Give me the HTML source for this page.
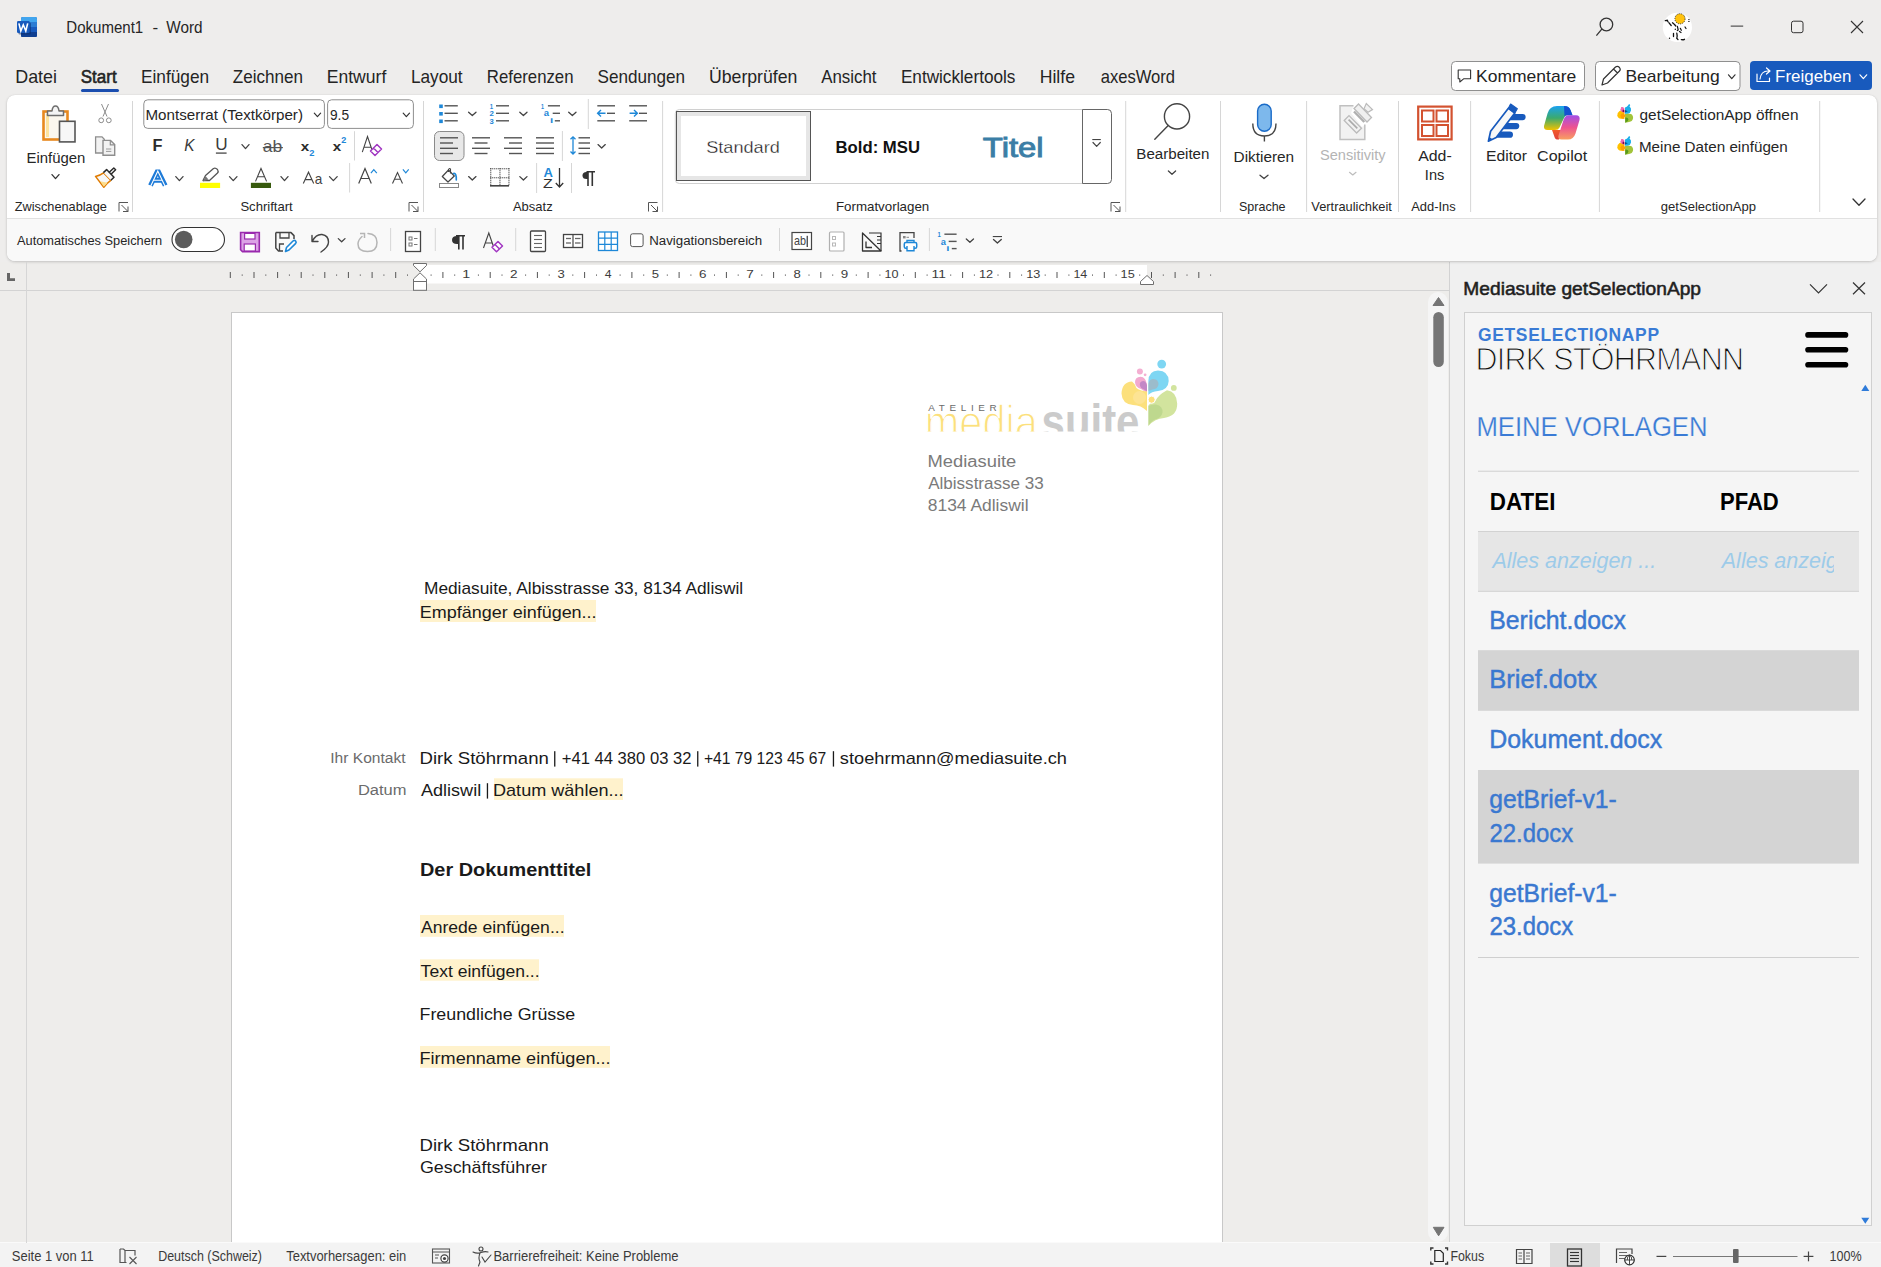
<!DOCTYPE html>
<html><head><meta charset="utf-8"><title>Dokument1 - Word</title>
<style>
html,body{margin:0;padding:0;}
body{width:1881px;height:1267px;overflow:hidden;position:relative;background:#EEEDEC;font-family:"Liberation Sans",sans-serif;}
.abs{position:absolute;box-sizing:border-box;}
#ribbon{left:7px;top:95px;width:1870px;height:166px;background:#fff;border-radius:8px;box-shadow:0 1px 3px rgba(0,0,0,0.18),0 0 1px rgba(0,0,0,0.12);overflow:hidden;}
#qat{left:0;top:123px;width:1870px;height:43px;background:#F9F9F9;border-top:1px solid #E1E1E1;}
#canvas{left:0;top:262px;width:1449px;height:981px;background:#EEEDEB;}
#page{left:231px;top:312px;width:992px;height:931px;background:#fff;border:1px solid #C8C8C8;border-bottom:none;}
#pane{left:1449px;top:262px;width:432px;height:981px;background:#F0F0F0;border-left:1px solid #D2D2D2;}
#panebox{left:1464px;top:312px;width:408px;height:914px;background:#F5F5F5;border:1px solid #D0D0D0;}
#status{left:0;top:1242px;width:1881px;height:25px;background:#F3F3F3;border-top:1px solid #FAFAFA;}
svg{position:absolute;left:0;top:0;font-family:"Liberation Sans",sans-serif;white-space:pre;}
</style></head>
<body>
<div class="abs" id="canvas"></div>
<div class="abs" id="page"></div>
<div class="abs" id="pane"><div class="abs" style="left:14px;top:50px;width:408px;height:914px;background:#F5F5F5;border:1px solid #D0D0D0;"></div></div>
<div class="abs" id="ribbon"><div class="abs" id="qat"></div></div>
<div class="abs" id="status"></div>
<svg width="1881" height="1267" viewBox="0 0 1881 1267">
<rect x="420" y="265" width="727" height="18.5" fill="#fff"/>
<rect x="0" y="290" width="1449" height="1" fill="#D3D3D3"/>
<rect x="26" y="262" width="1" height="981" fill="#D6D6D6"/>
<path d="M7,273 H10 V278.3 H15 V281 H7 Z" fill="#666"/>
<rect x="229.8" y="272" width="1" height="6" fill="#555"/>
<rect x="241.7" y="274.5" width="1" height="1.2" fill="#555"/>
<rect x="253.5" y="272" width="1" height="6" fill="#555"/>
<rect x="265.3" y="274.5" width="1" height="1.2" fill="#555"/>
<rect x="277.1" y="272" width="1" height="6" fill="#555"/>
<rect x="288.9" y="274.5" width="1" height="1.2" fill="#555"/>
<rect x="300.7" y="272" width="1" height="6" fill="#555"/>
<rect x="312.5" y="274.5" width="1" height="1.2" fill="#555"/>
<rect x="324.3" y="272" width="1" height="6" fill="#555"/>
<rect x="336.1" y="274.5" width="1" height="1.2" fill="#555"/>
<rect x="347.9" y="272" width="1" height="6" fill="#555"/>
<rect x="359.8" y="274.5" width="1" height="1.2" fill="#555"/>
<rect x="371.6" y="272" width="1" height="6" fill="#555"/>
<rect x="383.4" y="274.5" width="1" height="1.2" fill="#555"/>
<rect x="395.2" y="272" width="1" height="6" fill="#555"/>
<rect x="407.0" y="274.5" width="1" height="1.2" fill="#555"/>
<rect x="430.6" y="274.5" width="1" height="1.2" fill="#555"/>
<rect x="442.4" y="272" width="1" height="6" fill="#555"/>
<rect x="454.2" y="274.5" width="1" height="1.2" fill="#555"/>
<rect x="477.9" y="274.5" width="1" height="1.2" fill="#555"/>
<rect x="489.7" y="272" width="1" height="6" fill="#555"/>
<rect x="501.5" y="274.5" width="1" height="1.2" fill="#555"/>
<rect x="525.1" y="274.5" width="1" height="1.2" fill="#555"/>
<rect x="536.9" y="272" width="1" height="6" fill="#555"/>
<rect x="548.7" y="274.5" width="1" height="1.2" fill="#555"/>
<rect x="572.3" y="274.5" width="1" height="1.2" fill="#555"/>
<rect x="584.1" y="272" width="1" height="6" fill="#555"/>
<rect x="596.0" y="274.5" width="1" height="1.2" fill="#555"/>
<rect x="619.6" y="274.5" width="1" height="1.2" fill="#555"/>
<rect x="631.4" y="272" width="1" height="6" fill="#555"/>
<rect x="643.2" y="274.5" width="1" height="1.2" fill="#555"/>
<rect x="666.8" y="274.5" width="1" height="1.2" fill="#555"/>
<rect x="678.6" y="272" width="1" height="6" fill="#555"/>
<rect x="690.4" y="274.5" width="1" height="1.2" fill="#555"/>
<rect x="714.0" y="274.5" width="1" height="1.2" fill="#555"/>
<rect x="725.9" y="272" width="1" height="6" fill="#555"/>
<rect x="737.7" y="274.5" width="1" height="1.2" fill="#555"/>
<rect x="761.3" y="274.5" width="1" height="1.2" fill="#555"/>
<rect x="773.1" y="272" width="1" height="6" fill="#555"/>
<rect x="784.9" y="274.5" width="1" height="1.2" fill="#555"/>
<rect x="808.5" y="274.5" width="1" height="1.2" fill="#555"/>
<rect x="820.3" y="272" width="1" height="6" fill="#555"/>
<rect x="832.2" y="274.5" width="1" height="1.2" fill="#555"/>
<rect x="855.8" y="274.5" width="1" height="1.2" fill="#555"/>
<rect x="867.6" y="272" width="1" height="6" fill="#555"/>
<rect x="879.4" y="274.5" width="1" height="1.2" fill="#555"/>
<rect x="903.0" y="274.5" width="1" height="1.2" fill="#555"/>
<rect x="914.8" y="272" width="1" height="6" fill="#555"/>
<rect x="926.6" y="274.5" width="1" height="1.2" fill="#555"/>
<rect x="950.2" y="274.5" width="1" height="1.2" fill="#555"/>
<rect x="962.1" y="272" width="1" height="6" fill="#555"/>
<rect x="973.9" y="274.5" width="1" height="1.2" fill="#555"/>
<rect x="997.5" y="274.5" width="1" height="1.2" fill="#555"/>
<rect x="1009.3" y="272" width="1" height="6" fill="#555"/>
<rect x="1021.1" y="274.5" width="1" height="1.2" fill="#555"/>
<rect x="1044.7" y="274.5" width="1" height="1.2" fill="#555"/>
<rect x="1056.5" y="272" width="1" height="6" fill="#555"/>
<rect x="1068.4" y="274.5" width="1" height="1.2" fill="#555"/>
<rect x="1092.0" y="274.5" width="1" height="1.2" fill="#555"/>
<rect x="1103.8" y="272" width="1" height="6" fill="#555"/>
<rect x="1115.6" y="274.5" width="1" height="1.2" fill="#555"/>
<rect x="1139.2" y="274.5" width="1" height="1.2" fill="#555"/>
<rect x="1151.0" y="272" width="1" height="6" fill="#555"/>
<rect x="1162.8" y="274.5" width="1" height="1.2" fill="#555"/>
<rect x="1174.6" y="272" width="1" height="6" fill="#555"/>
<rect x="1186.5" y="274.5" width="1" height="1.2" fill="#555"/>
<rect x="1198.3" y="272" width="1" height="6" fill="#555"/>
<rect x="1210.1" y="274.5" width="1" height="1.2" fill="#555"/>
<path d="M413.5,263.5 H426.5 V265.5 L420,271.8 L413.5,265.5 Z" fill="#fff" stroke="#6E6E6E" stroke-width="1"/>
<path d="M420,272.8 L426.5,279 V281.5 H413.5 V279 Z" fill="#fff" stroke="#6E6E6E" stroke-width="1"/>
<rect x="413.5" y="281.5" width="13" height="8.8" fill="#fff" stroke="#6E6E6E" stroke-width="1"/>
<path d="M1147,275.5 L1153.5,281.5 V284.5 H1140.5 V281.5 Z" fill="#fff" stroke="#6E6E6E" stroke-width="1"/>
<rect x="1428" y="292" width="20" height="950" rx="10" fill="#F5F5F5"/>
<path d="M1438.5,297.5 L1444,305.5 H1433 Z" fill="#757575" stroke="#757575" stroke-width="1" stroke-linejoin="round"/>
<rect x="1433.3" y="312" width="10.5" height="55" rx="5.25" fill="#757575"/>
<path d="M1433.3,1227.3 H1444 L1438.6,1235.8 Z" fill="#757575" stroke="#757575" stroke-width="1" stroke-linejoin="round"/>
<rect x="21" y="17" width="16" height="20" rx="1.6" fill="#185ABD"/>
<rect x="21" y="17" width="16" height="5" rx="1.6" fill="#41A5EE"/><rect x="21" y="20" width="16" height="2" fill="#41A5EE"/>
<rect x="21" y="22" width="16" height="5" fill="#2B7CD3"/>
<rect x="21" y="27" width="16" height="5" fill="#185ABD"/>
<rect x="21" y="32" width="16" height="5" rx="1.6" fill="#103F91"/><rect x="21" y="32" width="16" height="2" fill="#103F91"/>
<rect x="18.5" y="22.5" width="12.5" height="12" rx="1.2" fill="#0B2E6B" fill-opacity="0.55"/>
<rect x="17" y="21" width="12.7" height="12" rx="1.2" fill="#185ABD"/>
<path d="M18.9,23.4 L20.8,31 L23.3,24.8 L25.8,31 L27.7,23.4" fill="none" stroke="#fff" stroke-width="1.6" stroke-linejoin="miter"/>
<circle cx="1606.4" cy="24.5" r="6.3" fill="none" stroke="#333" stroke-width="1.3"/>
<line x1="1601.8" y1="29.2" x2="1596.8" y2="35.2" stroke="#333" stroke-width="1.3" stroke-linecap="round"/>
<circle cx="1677.4" cy="27.4" r="14.6" fill="#fff"/>
<circle cx="1680" cy="18.8" r="5.1" fill="#FFC20E" stroke="#222" stroke-width="0.8" stroke-dasharray="1.2 1"/>
<path d="M1665.3,20.6 L1667.3,20.3 L1668,21.8 M1669,22.8 L1671.2,25.5 M1672.5,22.8 L1674,24 M1674.5,24.5 L1675.8,26" fill="none" stroke="#111" stroke-width="1.3" stroke-linecap="round"/>
<path d="M1677.4,26.3 L1678.2,30 L1677.3,30.5 M1675.3,29 L1675.3,29.5 M1680.3,28.3 L1681.3,30.3 M1679.5,31.5 L1681,32.5 M1685,27 L1686,28.5" fill="none" stroke="#111" stroke-width="1.2" stroke-linecap="round"/>
<path d="M1673.5,33.3 V36.5 M1676.8,33.2 Q1677.6,36.5 1676.8,38.3 L1678,39.6 M1681.3,39.6 Q1683,40 1684.5,39.3" fill="none" stroke="#111" stroke-width="1.3" stroke-linecap="round"/>
<path d="M1688.2,19.6 H1689.6 M1688.2,21.5 H1689.6" stroke="#111" stroke-width="0.9"/>
<circle cx="1669.5" cy="38.3" r="0.7" fill="#111"/>
<rect x="1730.7" y="25.6" width="12.5" height="1" fill="#333"/>
<rect x="1791.5" y="21.2" width="11.5" height="11.5" rx="2" fill="none" stroke="#333" stroke-width="1"/>
<path d="M1851,21 L1863,33 M1863,21 L1851,33" stroke="#333" stroke-width="1.1"/>
<rect x="81" y="89" width="38" height="3" rx="1.5" fill="#1A4DAF"/>
<rect x="1451.5" y="61.5" width="133" height="29" rx="4" fill="#fff" stroke="#8F8F8F"/>
<path d="M1458.2,70 H1470.6 V78.8 H1463.6 L1459.8,82 V78.8 H1458.2 Z" fill="none" stroke="#333" stroke-width="1.1" stroke-linejoin="round"/>
<rect x="1595.5" y="61.5" width="144.5" height="29" rx="4" fill="#fff" stroke="#8F8F8F"/>
<path d="M1602,85 L1603.5,79 L1615.5,67 Q1617.5,65.5 1619.5,67.5 Q1621,69.5 1619.5,71 L1607.5,83 Z M1613.5,69 L1617.5,73" fill="none" stroke="#333" stroke-width="1.2" stroke-linejoin="round"/>
<polyline points="1728.5,74.8 1731.75,78.6 1735,74.8" fill="none" stroke="#333" stroke-width="1.2" stroke-linecap="round" stroke-linejoin="round"/>
<rect x="1750" y="61" width="122" height="29" rx="4" fill="#185ABD"/>
<path d="M1757,74 V81.5 H1769.5 V78 M1760,79 Q1761,71 1768,71 H1769.5 M1766.5,68 L1770,71 L1766.5,74" fill="none" stroke="#fff" stroke-width="1.2" stroke-linejoin="round" stroke-linecap="round"/>
<polyline points="1860,74.8 1863.35,78.6 1866.7,74.8" fill="none" stroke="#fff" stroke-width="1.2" stroke-linecap="round" stroke-linejoin="round"/>
<rect x="43.5" y="111.5" width="24" height="28" fill="#FBF7EE" stroke="#E8891E" stroke-width="2.6"/>
<rect x="46" y="114" width="3" height="23" fill="#FCE3A0"/>
<path d="M47.5,115.5 V111 H52 Q52.5,106 55.5,106 Q58.5,106 59,111 H63.5 V115.5 Z" fill="#F4F4F4" stroke="#6E6E6E" stroke-width="1.5" stroke-linejoin="round"/>
<rect x="59.5" y="121.3" width="15.5" height="20.6" fill="#F7F7F7" stroke="#555" stroke-width="1.6"/>
<polyline points="52,174.6 55.5,178.6 59,174.6" fill="none" stroke="#333" stroke-width="1.3" stroke-linecap="round" stroke-linejoin="round"/>
<path d="M101.5,104 L107,116.5 M108.5,104 L103,116.5" stroke="#8C8C8C" stroke-width="1" fill="none"/>
<circle cx="101.2" cy="120.3" r="2.4" fill="none" stroke="#8C8C8C" stroke-width="1"/><circle cx="108.8" cy="120.3" r="2.4" fill="none" stroke="#8C8C8C" stroke-width="1"/>
<path d="M95.6,153 V136.8 H102 L104.3,139.2 V153 Z" fill="#F2F2F2" stroke="#8E8E8E" stroke-width="1.3" stroke-linejoin="miter"/>
<path d="M103,155.2 V140.4 H110.5 L114.7,144.6 V155.2 Z" fill="#F2F2F2" stroke="#8E8E8E" stroke-width="1.4" stroke-linejoin="miter"/>
<path d="M110.3,140.6 V144.8 H114.5" fill="none" stroke="#8E8E8E" stroke-width="1.2"/>
<path d="M106,149 H111.3 M106,151.4 H111.3" stroke="#9A9A9A" stroke-width="1"/>
<path d="M95.5,176.4 Q100,175.5 103.5,172.8 L110.8,180.3 Q107,183 103.8,187.2 Z" fill="#F7F7F7" stroke="#E07B00" stroke-width="1.5" stroke-linejoin="round"/>
<path d="M100.2,181.3 L107.6,182.8 L103.8,186.8 Z" fill="#FCDD8C"/>
<path d="M103.4,172.6 L106.6,169.6 L114,177.2 L110.9,180.2" fill="#F7F7F7" stroke="#2B2B2B" stroke-width="1.5" stroke-linejoin="round"/>
<path d="M109,172.5 L113.8,168 L115.6,169.8 L111,174.3" fill="none" stroke="#2B2B2B" stroke-width="1.5" stroke-linejoin="round"/>
<path d="M119.0,211.5 V202.5 H128.0" fill="none" stroke="#555" stroke-width="1"/><path d="M121.5,205 L128.0,211.5 M123.0,211.5 H128.0 V206.5" fill="none" stroke="#555" stroke-width="1"/>
<rect x="132.0" y="101" width="1" height="111" fill="#D6D6D6"/>
<rect x="143.8" y="99.8" width="180.6" height="28.6" rx="4" fill="#fff" stroke="#8F8F8F"/>
<polyline points="314.3,113.2 317.45000000000005,116.6 320.6,113.2" fill="none" stroke="#333" stroke-width="1.2" stroke-linecap="round" stroke-linejoin="round"/>
<rect x="327.6" y="99.8" width="85.8" height="28.6" rx="4" fill="#fff" stroke="#8F8F8F"/>
<polyline points="403.2,113.2 406.35,116.6 409.5,113.2" fill="none" stroke="#333" stroke-width="1.2" stroke-linecap="round" stroke-linejoin="round"/>
<text x="152.62" y="150.80" font-size="16.86" font-weight="bold" fill="#2b2b2b" textLength="9.98" lengthAdjust="spacingAndGlyphs">F</text>
<text x="184.24" y="150.80" font-size="16.86" font-weight="normal" font-style="italic" fill="#3a3a3a" textLength="10.29" lengthAdjust="spacingAndGlyphs">K</text>
<text x="215.19" y="150.30" font-size="16.42" font-weight="normal" fill="#3a3a3a" textLength="12.42" lengthAdjust="spacingAndGlyphs">U</text>
<rect x="215.9" y="152.4" width="10.7" height="1.4" fill="#555"/>
<polyline points="242,144.6 245.5,148.6 249,144.6" fill="none" stroke="#424242" stroke-width="1.3" stroke-linecap="round" stroke-linejoin="round"/>
<text x="262.76" y="151.60" font-size="16.28" font-weight="normal" fill="#555" textLength="19.48" lengthAdjust="spacingAndGlyphs">ab</text>
<rect x="262.8" y="147" width="20.1" height="1.2" fill="#555"/>
<text x="300.68" y="150.80" font-size="12.06" font-weight="bold" fill="#2b2b2b" textLength="8.45" lengthAdjust="spacingAndGlyphs">x</text>
<text x="309.38" y="155.60" font-size="9.01" font-weight="bold" fill="#1E88D8" textLength="5.19" lengthAdjust="spacingAndGlyphs">2</text>
<text x="332.68" y="150.80" font-size="12.06" font-weight="bold" fill="#2b2b2b" textLength="8.45" lengthAdjust="spacingAndGlyphs">x</text>
<text x="341.29" y="142.70" font-size="8.72" font-weight="bold" fill="#1E88D8" textLength="5.08" lengthAdjust="spacingAndGlyphs">2</text>
<rect x="354.0" y="131.2" width="1" height="29.30000000000001" fill="#D6D6D6"/>
<path d="M362.3,152.2 L367.5,136.5 L372.8,152.2 M364,147.3 H371" fill="none" stroke="#444" stroke-width="1.1"/>
<path d="M370.5,151 L377,144.5 L381.5,149 L375,155.5 Z M373.5,148 L378,152.5" fill="#fff" stroke="#A238C2" stroke-width="1.5" stroke-linejoin="round"/>
<path d="M150.5,185.5 L157.8,170.5 L165.2,185.5 M153.5,180.3 H162.1" fill="none" stroke="#1E7BD8" stroke-width="5" stroke-linejoin="bevel"/>
<path d="M150.5,186.5 L157.8,171 L165.2,186.5 M153.5,180.3 H162.1" fill="none" stroke="#fff" stroke-width="1.1" stroke-linejoin="miter"/>
<polyline points="175.8,176.6 179.4,180.6 183,176.6" fill="none" stroke="#424242" stroke-width="1.3" stroke-linecap="round" stroke-linejoin="round"/>
<path d="M203,180.5 L205.5,175.5 L213.5,168.5 Q215.5,167.5 217.5,169.5 Q218.8,171.5 217.5,173 L209.5,180.5 Z" fill="#fff" stroke="#555" stroke-width="1.3" stroke-linejoin="round"/>
<path d="M203,181.5 L205.5,176 L208.5,179.5 Z" fill="#777"/>
<rect x="200" y="182.8" width="20.1" height="5.2" fill="#FFFF00"/>
<polyline points="229.5,176.6 233.25,180.6 237,176.6" fill="none" stroke="#424242" stroke-width="1.3" stroke-linecap="round" stroke-linejoin="round"/>
<path d="M255.5,181.4 L261,168.5 L266.6,181.4 M257.6,176.7 H264.5" fill="none" stroke="#444" stroke-width="1.1"/>
<rect x="250.9" y="182.8" width="20.1" height="5.2" fill="#375A0D"/>
<polyline points="281,176.6 284.5,180.6 288,176.6" fill="none" stroke="#424242" stroke-width="1.3" stroke-linecap="round" stroke-linejoin="round"/>
<path d="M303.3,183.6 L308.5,172.2 L313.7,183.6 M305.2,179.6 H311.8" fill="none" stroke="#444" stroke-width="1.1"/>
<text x="314.73" y="183.60" font-size="15.12" font-weight="normal" fill="#444" textLength="7.57" lengthAdjust="spacingAndGlyphs">a</text>
<polyline points="329.5,176.6 333.35,180.6 337.2,176.6" fill="none" stroke="#424242" stroke-width="1.3" stroke-linecap="round" stroke-linejoin="round"/>
<rect x="349.1" y="163" width="1" height="29.5" fill="#D6D6D6"/>
<path d="M358.7,183.6 L365,168.5 L371.3,183.6 M361.2,178.5 H368.8" fill="none" stroke="#444" stroke-width="1.2"/>
<polyline points="370.9,173.2 373.8,169.6 376.8,173.2" fill="none" stroke="#1E88D8" stroke-width="1.2"/>
<path d="M392.5,183.6 L397.5,172.5 L402.5,183.6 M394.6,179.2 H400.6" fill="none" stroke="#444" stroke-width="1.1"/>
<polyline points="402.9,169.4 405.8,172.8 408.7,169.4" fill="none" stroke="#1E88D8" stroke-width="1.2"/>
<path d="M409.0,211.5 V202.5 H418.0" fill="none" stroke="#555" stroke-width="1"/><path d="M411.5,205 L418.0,211.5 M413.0,211.5 H418.0 V206.5" fill="none" stroke="#555" stroke-width="1"/>
<rect x="423.0" y="101" width="1" height="111" fill="#D6D6D6"/>
<rect x="439.2" y="104.5" width="3.6" height="3.6" fill="#1E88D8"/>
<rect x="439.2" y="112.0" width="3.6" height="3.6" fill="#1E88D8"/>
<rect x="439.2" y="119.5" width="3.6" height="3.6" fill="#1E88D8"/>
<rect x="444.5" y="105.10" width="13.300000000000011" height="1.4" fill="#555"/><rect x="444.5" y="112.60" width="13.300000000000011" height="1.4" fill="#555"/><rect x="444.5" y="120.10" width="13.300000000000011" height="1.4" fill="#555"/>
<polyline points="468.6,112.3 472.3,115.6 476,112.3" fill="none" stroke="#424242" stroke-width="1.3" stroke-linecap="round" stroke-linejoin="round"/>
<text x="489.83" y="108.80" font-size="7.27" font-weight="bold" fill="#1E88D8" textLength="3.34" lengthAdjust="spacingAndGlyphs">1</text>
<text x="489.53" y="116.30" font-size="7.27" font-weight="bold" fill="#1E88D8" textLength="4.38" lengthAdjust="spacingAndGlyphs">2</text>
<text x="489.63" y="123.80" font-size="7.27" font-weight="bold" fill="#1E88D8" textLength="4.24" lengthAdjust="spacingAndGlyphs">3</text>
<rect x="496" y="105.10" width="13" height="1.4" fill="#555"/><rect x="496" y="112.60" width="13" height="1.4" fill="#555"/><rect x="496" y="120.10" width="13" height="1.4" fill="#555"/>
<polyline points="519.8,112.3 523.4,115.6 527,112.3" fill="none" stroke="#424242" stroke-width="1.3" stroke-linecap="round" stroke-linejoin="round"/>
<text x="540.97" y="108.80" font-size="7.27" font-weight="bold" fill="#1E88D8" textLength="2.98" lengthAdjust="spacingAndGlyphs">1</text>
<text x="543.83" y="116.40" font-size="9.45" font-weight="bold" fill="#1E88D8" textLength="5.29" lengthAdjust="spacingAndGlyphs">a</text>
<text x="549.99" y="123.20" font-size="7.56" font-weight="bold" fill="#1E88D8" textLength="3.22" lengthAdjust="spacingAndGlyphs">i</text>
<rect x="547.9" y="105.10" width="12.100000000000023" height="1.4" fill="#555"/>
<rect x="552.7" y="112.60" width="7.2999999999999545" height="1.4" fill="#555"/>
<rect x="554.8" y="120.10" width="5.2000000000000455" height="1.4" fill="#555"/>
<polyline points="568.7,112.3 572.35,115.6 576,112.3" fill="none" stroke="#424242" stroke-width="1.3" stroke-linecap="round" stroke-linejoin="round"/>
<rect x="587.8" y="99" width="1" height="30" fill="#D6D6D6"/>
<rect x="597.3" y="105.10" width="17.700000000000045" height="1.4" fill="#555"/><rect x="597.3" y="120.10" width="17.700000000000045" height="1.4" fill="#555"/>
<rect x="607" y="112.60" width="8" height="1.4" fill="#555"/>
<path d="M605.5,113.3 H597.8 M601,110 L597.6,113.3 L601,116.6" fill="none" stroke="#1E88D8" stroke-width="1.4"/>
<rect x="629.2" y="105.10" width="17.799999999999955" height="1.4" fill="#555"/><rect x="629.2" y="120.10" width="17.799999999999955" height="1.4" fill="#555"/>
<rect x="639" y="112.60" width="8" height="1.4" fill="#555"/>
<path d="M629.6,113.3 H637.3 M634,110 L637.4,113.3 L634,116.6" fill="none" stroke="#1E88D8" stroke-width="1.4"/>
<rect x="434.5" y="131.5" width="29.5" height="29" rx="5" fill="#E8E8E8" stroke="#8A8A8A"/>
<rect x="440" y="137.10" width="18" height="1.4" fill="#555"/><rect x="440" y="147.60" width="18" height="1.4" fill="#555"/>
<rect x="440" y="142.30" width="13" height="1.4" fill="#555"/><rect x="440" y="152.80" width="13" height="1.4" fill="#555"/>
<rect x="472" y="137.10" width="18" height="1.4" fill="#555"/><rect x="472" y="147.60" width="18" height="1.4" fill="#555"/>
<rect x="474.5" y="142.30" width="13.0" height="1.4" fill="#555"/><rect x="474.5" y="152.80" width="13.0" height="1.4" fill="#555"/>
<rect x="504" y="137.10" width="18" height="1.4" fill="#555"/><rect x="504" y="147.60" width="18" height="1.4" fill="#555"/>
<rect x="509" y="142.30" width="13" height="1.4" fill="#555"/><rect x="509" y="152.80" width="13" height="1.4" fill="#555"/>
<rect x="536" y="137.10" width="18" height="1.4" fill="#555"/><rect x="536" y="142.30" width="18" height="1.4" fill="#555"/><rect x="536" y="147.60" width="18" height="1.4" fill="#555"/><rect x="536" y="152.80" width="18" height="1.4" fill="#555"/>
<rect x="561.9" y="131" width="1" height="30" fill="#D6D6D6"/>
<path d="M573,136.8 V154 M570.5,139.3 L573,136.8 L575.5,139.3 M570.5,151.5 L573,154 L575.5,151.5" fill="none" stroke="#1E88D8" stroke-width="1.3"/>
<rect x="578.5" y="137.10" width="11.5" height="1.4" fill="#555"/><rect x="578.5" y="142.30" width="11.5" height="1.4" fill="#555"/><rect x="578.5" y="147.60" width="11.5" height="1.4" fill="#555"/><rect x="578.5" y="152.80" width="11.5" height="1.4" fill="#555"/>
<polyline points="598,144.6 601.65,148 605.3,144.6" fill="none" stroke="#424242" stroke-width="1.3" stroke-linecap="round" stroke-linejoin="round"/>
<path d="M442.3,176.5 L448.5,170 L454.3,176 L448,182 Z" fill="#fff" stroke="#444" stroke-width="1.2" stroke-linejoin="round"/>
<path d="M448.5,172 V169.5 Q449.5,167.8 450.5,169 V173.5" fill="none" stroke="#444" stroke-width="1.1"/>
<path d="M453.5,173.5 Q456.5,172.5 456.3,180" fill="none" stroke="#1E88D8" stroke-width="1.6" stroke-linecap="round"/>
<rect x="439.5" y="183.5" width="19" height="4" fill="#fff" stroke="#888" stroke-width="1"/>
<polyline points="468.6,176.6 472.3,180 476,176.6" fill="none" stroke="#424242" stroke-width="1.3" stroke-linecap="round" stroke-linejoin="round"/>
<rect x="490.2" y="168.2" width="1.1" height="1.1" fill="#444"/><rect x="490.2" y="177.2" width="1.1" height="1.1" fill="#444"/><rect x="492.2" y="168.2" width="1.1" height="1.1" fill="#444"/><rect x="492.2" y="177.2" width="1.1" height="1.1" fill="#444"/><rect x="494.2" y="168.2" width="1.1" height="1.1" fill="#444"/><rect x="494.2" y="177.2" width="1.1" height="1.1" fill="#444"/><rect x="496.2" y="168.2" width="1.1" height="1.1" fill="#444"/><rect x="496.2" y="177.2" width="1.1" height="1.1" fill="#444"/><rect x="498.2" y="168.2" width="1.1" height="1.1" fill="#444"/><rect x="498.2" y="177.2" width="1.1" height="1.1" fill="#444"/><rect x="500.2" y="168.2" width="1.1" height="1.1" fill="#444"/><rect x="500.2" y="177.2" width="1.1" height="1.1" fill="#444"/><rect x="502.2" y="168.2" width="1.1" height="1.1" fill="#444"/><rect x="502.2" y="177.2" width="1.1" height="1.1" fill="#444"/><rect x="504.2" y="168.2" width="1.1" height="1.1" fill="#444"/><rect x="504.2" y="177.2" width="1.1" height="1.1" fill="#444"/><rect x="506.2" y="168.2" width="1.1" height="1.1" fill="#444"/><rect x="506.2" y="177.2" width="1.1" height="1.1" fill="#444"/><rect x="508.2" y="168.2" width="1.1" height="1.1" fill="#444"/><rect x="508.2" y="177.2" width="1.1" height="1.1" fill="#444"/><rect x="490.2" y="168.2" width="1.1" height="1.1" fill="#444"/><rect x="499.4" y="168.2" width="1.1" height="1.1" fill="#444"/><rect x="508.4" y="168.2" width="1.1" height="1.1" fill="#444"/><rect x="490.2" y="170.2" width="1.1" height="1.1" fill="#444"/><rect x="499.4" y="170.2" width="1.1" height="1.1" fill="#444"/><rect x="508.4" y="170.2" width="1.1" height="1.1" fill="#444"/><rect x="490.2" y="172.2" width="1.1" height="1.1" fill="#444"/><rect x="499.4" y="172.2" width="1.1" height="1.1" fill="#444"/><rect x="508.4" y="172.2" width="1.1" height="1.1" fill="#444"/><rect x="490.2" y="174.2" width="1.1" height="1.1" fill="#444"/><rect x="499.4" y="174.2" width="1.1" height="1.1" fill="#444"/><rect x="508.4" y="174.2" width="1.1" height="1.1" fill="#444"/><rect x="490.2" y="176.2" width="1.1" height="1.1" fill="#444"/><rect x="499.4" y="176.2" width="1.1" height="1.1" fill="#444"/><rect x="508.4" y="176.2" width="1.1" height="1.1" fill="#444"/><rect x="490.2" y="178.2" width="1.1" height="1.1" fill="#444"/><rect x="499.4" y="178.2" width="1.1" height="1.1" fill="#444"/><rect x="508.4" y="178.2" width="1.1" height="1.1" fill="#444"/><rect x="490.2" y="180.2" width="1.1" height="1.1" fill="#444"/><rect x="499.4" y="180.2" width="1.1" height="1.1" fill="#444"/><rect x="508.4" y="180.2" width="1.1" height="1.1" fill="#444"/><rect x="490.2" y="182.2" width="1.1" height="1.1" fill="#444"/><rect x="499.4" y="182.2" width="1.1" height="1.1" fill="#444"/><rect x="508.4" y="182.2" width="1.1" height="1.1" fill="#444"/><rect x="490.2" y="184.2" width="1.1" height="1.1" fill="#444"/><rect x="499.4" y="184.2" width="1.1" height="1.1" fill="#444"/><rect x="508.4" y="184.2" width="1.1" height="1.1" fill="#444"/>
<rect x="490" y="185" width="19" height="1.6" fill="#444"/>
<polyline points="519.8,176.6 523.4,180 527,176.6" fill="none" stroke="#424242" stroke-width="1.3" stroke-linecap="round" stroke-linejoin="round"/>
<rect x="536.1" y="163" width="1" height="30" fill="#D6D6D6"/>
<text x="543.49" y="176.50" font-size="12.06" font-weight="bold" fill="#1E88D8" textLength="9.46" lengthAdjust="spacingAndGlyphs">A</text>
<text x="542.99" y="188.00" font-size="12.06" font-weight="normal" fill="#333" textLength="9.70" lengthAdjust="spacingAndGlyphs">Z</text>
<path d="M559.5,168 V187 M555.8,183 L559.5,187 L563.2,183" fill="none" stroke="#333" stroke-width="1.3"/>
<rect x="571.0" y="163" width="1" height="30" fill="#D6D6D6"/>
<path d="M588,172 H586.5 Q582.5,172 582.5,175.5 Q582.5,179 586.5,179 H588 Z" fill="#333"/>
<path d="M588,171.5 V186 M592.3,171.5 V186 M586.5,171.8 H595" stroke="#333" stroke-width="1.6" fill="none"/>
<path d="M648.5,211.5 V202.5 H657.5" fill="none" stroke="#555" stroke-width="1"/><path d="M651,205 L657.5,211.5 M652.5,211.5 H657.5 V206.5" fill="none" stroke="#555" stroke-width="1"/>
<rect x="662.1" y="101" width="1" height="111" fill="#D6D6D6"/>
<rect x="675.3" y="109.5" width="436" height="74" rx="4" fill="#fff" stroke="#D0D0D0"/>
<rect x="676.5" y="111.5" width="134" height="69" fill="#fff" stroke="#555" stroke-width="1"/>
<rect x="679" y="114" width="129" height="64" fill="none" stroke="#E6E6E6" stroke-width="4"/>
<path d="M1082.5,109.5 H1107.5 Q1111.5,109.5 1111.5,113.5 V179.5 Q1111.5,183.5 1107.5,183.5 H1082.5 Z" fill="#fff" stroke="#666"/>
<rect x="1092.3" y="139" width="8.5" height="1.1" fill="#444"/>
<polyline points="1093,142.5 1096.65,146.3 1100.3,142.5" fill="none" stroke="#444" stroke-width="1.2" stroke-linecap="round" stroke-linejoin="round"/>
<path d="M1111.0,211.5 V202.5 H1120.0" fill="none" stroke="#555" stroke-width="1"/><path d="M1113.5,205 L1120.0,211.5 M1115.0,211.5 H1120.0 V206.5" fill="none" stroke="#555" stroke-width="1"/>
<rect x="1125.2" y="101" width="1" height="111" fill="#D6D6D6"/>
<circle cx="1177" cy="116.4" r="12.6" fill="#fff" stroke="#444" stroke-width="1.4"/>
<line x1="1168.2" y1="125.5" x2="1154.8" y2="139.2" stroke="#444" stroke-width="1.4" stroke-linecap="round"/>
<polyline points="1168.4,171 1172.0,174.2 1175.6,171" fill="none" stroke="#424242" stroke-width="1.3" stroke-linecap="round" stroke-linejoin="round"/>
<rect x="1220.0" y="101" width="1" height="111" fill="#D6D6D6"/>
<rect x="1257.6" y="104.2" width="13.6" height="27" rx="6.8" fill="#7DB8EC" stroke="#1A6BC8" stroke-width="1.4"/>
<path d="M1252.8,123.5 Q1252.8,136 1264.4,136 Q1276,136 1276,123.5 M1264.4,136 V141.5" fill="none" stroke="#444" stroke-width="1.4"/>
<polyline points="1260,175.2 1264.0,178.5 1268,175.2" fill="none" stroke="#424242" stroke-width="1.3" stroke-linecap="round" stroke-linejoin="round"/>
<rect x="1306.1" y="101" width="1" height="111" fill="#D6D6D6"/>
<path d="M1353.5,105.8 H1340 V139.6 H1364.8 V124.5 L1362,127 L1351,113 Z" fill="#F2F2F2"/>
<path d="M1353.5,105.8 H1340 V139.6 H1364.8 V124.5" fill="none" stroke="#C0C0C0" stroke-width="1.5"/>
<path d="M1344.2,120.5 L1349,115.6 L1361.5,128.2 L1356.6,133 Z" fill="#F2F2F2" stroke="#BBBBBB" stroke-width="1.3" stroke-linejoin="miter"/>
<path d="M1348.6,119.6 L1357.3,128.4" stroke="#AAAAAA" stroke-width="1.6"/>
<path d="M1354,108.5 L1358.5,104 L1371.5,117.5 L1367,122 Z" fill="#F0F0F0" stroke="#BBBBBB" stroke-width="1.3"/>
<path d="M1354,111.5 L1364.3,122" stroke="#B0B0B0" stroke-width="2.4"/>
<path d="M1364,108.8 L1366.3,103.6 L1372.5,109.6 L1368,112.3 Z" fill="#F2F2F2" stroke="#BBBBBB" stroke-width="1.2"/>
<polyline points="1349.5,172.3 1352.75,175 1356,172.3" fill="none" stroke="#BDBDBD" stroke-width="1.2" stroke-linecap="round" stroke-linejoin="round"/>
<rect x="1398.0" y="101" width="1" height="111" fill="#D6D6D6"/>
<rect x="1418.2" y="106.6" width="33.4" height="32.8" fill="#fff" stroke="#D35230" stroke-width="2.2"/>
<rect x="1422" y="110.5" width="11.5" height="11" fill="#fff" stroke="#D35230" stroke-width="2"/>
<rect x="1436.5" y="110.5" width="11.5" height="11" fill="#fff" stroke="#D35230" stroke-width="2"/>
<rect x="1422" y="125" width="11.5" height="11" fill="#fff" stroke="#D35230" stroke-width="2"/>
<rect x="1436.5" y="125" width="11.5" height="11" fill="#fff" stroke="#D35230" stroke-width="2"/>
<rect x="1470.1" y="101" width="1" height="111" fill="#D6D6D6"/>
<path d="M1510.6,113.6 H1522.5" stroke="#185ABD" stroke-width="0" />
<path d="M1508.5,117.1 H1522.6 M1502.2,126.1 H1516.2 M1495.4,134.7 H1509.9" stroke="#185ABD" stroke-width="6.2" stroke-linecap="round"/>
<path d="M1508.4,108.2 L1490.6,131.2 L1488.4,141.2 L1496.2,137.4 L1514.8,113 Z" fill="#F8F8F8" stroke="#185ABD" stroke-width="1.7" stroke-linejoin="round"/>
<path d="M1510.6,104.1 L1517.3,108.8 L1514.8,113 L1508.4,108.2 Z" fill="#185ABD" stroke="#185ABD" stroke-width="1.2" stroke-linejoin="round"/>
<path d="M1488.4,141.2 L1489.3,137 L1492.5,139.3 Z" fill="#185ABD"/>
<defs>
<linearGradient id="cpA" x1="0" y1="0" x2="0" y2="1"><stop offset="0" stop-color="#1AA1F0"/><stop offset="0.5" stop-color="#3BAA6E"/><stop offset="1" stop-color="#F2C200"/></linearGradient>
<linearGradient id="cpB" x1="0" y1="0" x2="0" y2="1"><stop offset="0" stop-color="#A24FE8"/><stop offset="0.5" stop-color="#EE5290"/><stop offset="1" stop-color="#F8A060"/></linearGradient>
<linearGradient id="cpC" x1="0" y1="0" x2="0" y2="1"><stop offset="0" stop-color="#F25A2A"/><stop offset="1" stop-color="#E0403A"/></linearGradient>
</defs>
<path d="M1552,130 H1562 L1559,139.5 H1557 Q1555,139.5 1554,135.5 Z" fill="url(#cpC)"/>
<path d="M1557,106 H1565 Q1569,106 1570.5,110 L1572.5,115.2 H1567 Q1565,115.2 1564,118 L1559.5,127.5 Q1558.3,130 1555,130 H1547.5 Q1543.5,130 1544,126 L1547.5,113.5 Q1549.5,106 1557,106 Z" fill="url(#cpA)"/>
<path d="M1564,106 Q1569,106 1570.5,110 L1572.5,115.2 H1567 Q1565,115.2 1564.5,116.5 Z" fill="#1550D0"/>
<path d="M1568.5,115.2 H1576 Q1580.5,115.2 1579.5,120 L1575.5,133.5 Q1573.5,139.5 1568,139.5 H1561.5 Q1557.5,139.5 1558.5,135.5 L1563.5,120 Q1565,115.2 1568.5,115.2 Z" fill="url(#cpB)"/>
<rect x="1598.9" y="101" width="1" height="111" fill="#D6D6D6"/>
<g transform="translate(0,0)"><path d="M1624.3,111.5 Q1622,110 1619.5,111 Q1617,112.5 1617.3,115.5 Q1617.8,118.5 1621,118.8 L1624.3,118.8 Z" fill="#FFC000"/><path d="M1624.3,113.3 Q1621,113 1620.5,115.5 Q1620.5,118.5 1622.5,118.8 L1624.3,118.8 Z" fill="#FF9F00"/><path d="M1622.5,107.2 L1624.3,108 V112.8 Q1621,112 1620.2,110 Q1620.5,108 1622.5,107.2 Z" fill="#F06AB0"/><path d="M1623,109.5 L1624.3,110 V112.5 L1622.3,111.5 Z" fill="#7A0B50"/><rect x="1621" y="107" width="2.2" height="0.9" fill="#F06AB0"/><path d="M1625,107.5 Q1627,107 1628,105.5 Q1628.5,104 1629.8,104.2 Q1630.8,105 1629.5,106.5 Q1631.5,108 1631,110.5 Q1630.5,113 1628,113.8 L1625,113.8 Z" fill="#1AAEEA"/><path d="M1625,110 L1627.8,111.3 L1625,112.5 Z" fill="#0A4E8A"/><path d="M1625,114 Q1628,113.3 1631,114 Q1633.5,115.5 1633,118.5 Q1632.5,121.5 1629,122 L1625.3,122.7 Z" fill="#A2C43A"/><path d="M1625.2,117.5 Q1628,117 1628.5,119.3 Q1628.5,121.5 1625.3,122.7 Z" fill="#5A9A1A"/><circle cx="1624.3" cy="115.8" r="1.2" fill="#FF9F00"/></g>
<g transform="translate(0,32)"><path d="M1624.3,111.5 Q1622,110 1619.5,111 Q1617,112.5 1617.3,115.5 Q1617.8,118.5 1621,118.8 L1624.3,118.8 Z" fill="#FFC000"/><path d="M1624.3,113.3 Q1621,113 1620.5,115.5 Q1620.5,118.5 1622.5,118.8 L1624.3,118.8 Z" fill="#FF9F00"/><path d="M1622.5,107.2 L1624.3,108 V112.8 Q1621,112 1620.2,110 Q1620.5,108 1622.5,107.2 Z" fill="#F06AB0"/><path d="M1623,109.5 L1624.3,110 V112.5 L1622.3,111.5 Z" fill="#7A0B50"/><rect x="1621" y="107" width="2.2" height="0.9" fill="#F06AB0"/><path d="M1625,107.5 Q1627,107 1628,105.5 Q1628.5,104 1629.8,104.2 Q1630.8,105 1629.5,106.5 Q1631.5,108 1631,110.5 Q1630.5,113 1628,113.8 L1625,113.8 Z" fill="#1AAEEA"/><path d="M1625,110 L1627.8,111.3 L1625,112.5 Z" fill="#0A4E8A"/><path d="M1625,114 Q1628,113.3 1631,114 Q1633.5,115.5 1633,118.5 Q1632.5,121.5 1629,122 L1625.3,122.7 Z" fill="#A2C43A"/><path d="M1625.2,117.5 Q1628,117 1628.5,119.3 Q1628.5,121.5 1625.3,122.7 Z" fill="#5A9A1A"/><circle cx="1624.3" cy="115.8" r="1.2" fill="#FF9F00"/></g>
<rect x="1819.2" y="101" width="1" height="111" fill="#D6D6D6"/>
<polyline points="1853,199 1859.0,205.3 1865,199" fill="none" stroke="#333" stroke-width="1.3" stroke-linecap="round" stroke-linejoin="round"/>
<rect x="172" y="227.5" width="52.5" height="24" rx="12" fill="#fff" stroke="#333" stroke-width="1.1"/>
<circle cx="183.7" cy="239.5" r="8.8" fill="#5C5C5C"/>
<path d="M240.6,232.5 H259.3 V251.6 H242.5 L240.6,249.7 Z" fill="#DCA3E6" stroke="#9A2AAE" stroke-width="1.6" stroke-linejoin="miter"/>
<rect x="244.6" y="233.4" width="10.4" height="5.6" fill="#fff" stroke="#9A2AAE" stroke-width="1.2"/><rect x="244.2" y="244" width="11.2" height="7" fill="#fff" stroke="#9A2AAE" stroke-width="1.2"/>
<path d="M275.8,232.6 H291 L294,235.6 V239 M275.8,232.6 V248 L278.5,251 H283" fill="none" stroke="#444" stroke-width="1.5" stroke-linejoin="round"/>
<path d="M280,233 V238 H289 V233 M279.5,251 V244 H284" fill="none" stroke="#444" stroke-width="1.3"/>
<path d="M285.5,251.5 L286.5,247.5 L293,241 Q294.5,239.8 295.6,241 Q296.8,242.3 295.5,243.6 L289,250 Z" fill="#fff" stroke="#1E88D8" stroke-width="1.6" stroke-linejoin="round"/>
<path d="M312,235.5 V241.5 H318 M312.5,241 Q316,234 322,234.5 Q328.5,235.5 328.5,242 Q328.5,247 321,252" fill="none" stroke="#444" stroke-width="1.4" stroke-linecap="round" stroke-linejoin="round"/>
<polyline points="338.3,238.6 341.65,241.8 345,238.6" fill="none" stroke="#424242" stroke-width="1.3" stroke-linecap="round" stroke-linejoin="round"/>
<path d="M362,236.5 Q358,240 358,244 Q358,251.5 367.5,251.5 Q377,251.5 377,242.5 Q377,234 368,233.5" fill="none" stroke="#B5B5B5" stroke-width="1.5" stroke-linecap="round"/>
<path d="M360,233.5 H364.5 V238" fill="none" stroke="#B5B5B5" stroke-width="1.5"/>
<rect x="390.1" y="228" width="1" height="23" fill="#D6D6D6"/>
<rect x="405.5" y="231.5" width="15" height="20" fill="#fff" stroke="#444" stroke-width="1.3"/>
<rect x="409" y="237" width="3" height="3" fill="none" stroke="#777" stroke-width="1"/><rect x="409" y="243" width="3" height="3" fill="none" stroke="#777" stroke-width="1"/>
<path d="M414,238.5 H417.5 M414,244.5 H417.5" stroke="#777" stroke-width="1"/>
<rect x="434.8" y="228" width="1" height="23" fill="#D6D6D6"/>
<path d="M459,236 H457 Q452,236 452,240 Q452,244 457,244 H459 Z" fill="#333"/>
<path d="M458.8,235.5 V249.5 M463,235.5 V249.5 M456,235.8 H465" stroke="#333" stroke-width="1.6" fill="none"/>
<path d="M483.5,248 L488.8,233 L494,248 M485.4,243 H492" fill="none" stroke="#444" stroke-width="1.1"/>
<path d="M492,247.3 L498,241.5 L502.5,246 L496.5,251.8 Z M495,244.5 L499.5,249" fill="#fff" stroke="#A238C2" stroke-width="1.5" stroke-linejoin="round"/>
<rect x="515.2" y="228" width="1" height="23" fill="#D6D6D6"/>
<rect x="530.5" y="231" width="15" height="20.5" rx="1" fill="#fff" stroke="#444" stroke-width="1.3"/>
<rect x="534" y="234.95" width="8" height="1.1" fill="#666"/><rect x="534" y="238.95" width="8" height="1.1" fill="#666"/><rect x="534" y="242.95" width="8" height="1.1" fill="#666"/><rect x="534" y="246.95" width="8" height="1.1" fill="#666"/>
<rect x="563.5" y="234.5" width="19" height="13" fill="#fff" stroke="#444" stroke-width="1.3"/>
<path d="M573,234.5 V247.5" stroke="#444" stroke-width="1.2"/>
<rect x="566" y="237.85" width="5" height="1.3" fill="#666"/><rect x="566" y="242.35" width="5" height="1.3" fill="#666"/>
<rect x="575" y="237.85" width="5.5" height="1.3" fill="#666"/><rect x="575" y="242.35" width="5.5" height="1.3" fill="#666"/>
<rect x="598.5" y="232" width="19" height="18.5" fill="#fff" stroke="#1E88D8" stroke-width="1.3"/>
<path d="M604.8,232 V250.5 M611.2,232 V250.5 M598.5,238.2 H617.5 M598.5,244.4 H617.5" stroke="#1E88D8" stroke-width="1.2"/>
<rect x="630.6" y="233.8" width="12.5" height="12.8" rx="2" fill="#fff" stroke="#555" stroke-width="1"/>
<rect x="779.0" y="228" width="1" height="23" fill="#D6D6D6"/>
<rect x="792" y="232.5" width="19.5" height="17" fill="#fff" stroke="#444" stroke-width="1.2"/>
<text x="793.95" y="245.20" font-size="12.94" font-weight="normal" fill="#444" textLength="12.01" lengthAdjust="spacingAndGlyphs">ab</text>
<rect x="806.6" y="235.8" width="1.3" height="11.2" fill="#444"/>
<rect x="829.5" y="232" width="14.5" height="19" rx="1" fill="#fff" stroke="#B0B0B0" stroke-width="1.2"/>
<rect x="832.5" y="236.5" width="3" height="3" fill="none" stroke="#B8B8B8"/><rect x="832.5" y="243" width="3" height="3" fill="none" stroke="#B8B8B8"/>
<path d="M862.5,233 L881,251 H862.5 Z M866,241.5 V247.5 H872" fill="none" stroke="#333" stroke-width="1.3" stroke-linejoin="round"/>
<path d="M869,233 H881 V251 M877,236.5 H881 M877,240 H881 M877,243.5 H881" fill="none" stroke="#333" stroke-width="1.2"/>
<path d="M901.5,251 H900 V232.6 H914 V238" fill="none" stroke="#444" stroke-width="1.3"/>
<rect x="903" y="236" width="2.6" height="2.4" fill="#888"/><rect x="906.5" y="236.8" width="2.5" height="1" fill="#888"/>
<path d="M907,242.5 V240.5 H914 V242.5" fill="none" stroke="#1E88D8" stroke-width="1.4"/>
<rect x="904.3" y="242.6" width="12.4" height="5.6" rx="1.5" fill="#fff" stroke="#1E88D8" stroke-width="1.5"/>
<path d="M907,246 V250.8 H914 V246" fill="#fff" stroke="#1E88D8" stroke-width="1.4"/>
<rect x="928.9" y="228" width="1" height="23" fill="#D6D6D6"/>
<text x="937.43" y="237.20" font-size="7.27" font-weight="bold" fill="#1E88D8" textLength="3.34" lengthAdjust="spacingAndGlyphs">1</text>
<text x="940.74" y="245.30" font-size="9.59" font-weight="bold" fill="#1E88D8" textLength="5.19" lengthAdjust="spacingAndGlyphs">a</text>
<text x="946.39" y="251.40" font-size="7.56" font-weight="bold" fill="#1E88D8" textLength="3.22" lengthAdjust="spacingAndGlyphs">i</text>
<rect x="944.4" y="233.50" width="12.200000000000045" height="1.4" fill="#555"/>
<rect x="948.7" y="240.70" width="7.899999999999977" height="1.4" fill="#555"/>
<rect x="951.8" y="247.90" width="4.800000000000068" height="1.4" fill="#555"/>
<polyline points="966.3,239 969.9,242.2 973.5,239" fill="none" stroke="#424242" stroke-width="1.3" stroke-linecap="round" stroke-linejoin="round"/>
<rect x="992.8" y="236" width="9.2" height="1.1" fill="#444"/>
<polyline points="993.5,239.4 997.4,243 1001.3,239.4" fill="none" stroke="#424242" stroke-width="1.3" stroke-linecap="round" stroke-linejoin="round"/>
<text x="928.18" y="411.00" font-size="9.88" font-weight="normal" fill="#6a6a6a" textLength="68.57" lengthAdjust="spacing">ATELIER</text>
<clipPath id="logoclip"><rect x="920" y="340" width="270" height="91.5"/></clipPath>
<g clip-path="url(#logoclip)">
<text x="924.76" y="440.00" font-size="49.42" font-weight="normal" fill="#FCE07C" stroke="#fff" stroke-width="1.5" textLength="113.13" lengthAdjust="spacingAndGlyphs">media</text>
<text x="1041.57" y="439.00" font-size="49.42" font-weight="bold" fill="#CBCBCB" textLength="97.85" lengthAdjust="spacingAndGlyphs">suite</text>
</g>
<circle cx="1161.7" cy="364.1" r="4.4" fill="#7ED6F3"/>
<circle cx="1139.9" cy="371.5" r="3" fill="#F4AFD2"/><circle cx="1145.1" cy="374.8" r="1.4" fill="#F4AFD2"/>
<path d="M1147,393 L1147,385 Q1146,377 1140.5,376.8 Q1135,377 1135,382.3 Q1135.5,387.5 1141,389 Z" fill="#F2A9CF"/>
<path d="M1147,391.5 L1147,385.5 Q1146.3,381 1143,381 Q1139.5,381.5 1139.8,385 Q1140.5,388.5 1144,389.5 Z" fill="#C388C6"/>
<path d="M1148.2,395 V381 Q1149,370.5 1158,370.4 Q1168.5,370.8 1168.7,381 Q1168.3,390 1158,391 Q1151.5,391.5 1148.2,395 Z" fill="#7ED6F3"/>
<path d="M1148.2,391 V384 Q1149.5,379 1153.5,379 Q1158.5,379.5 1158.5,384.3 Q1158,389 1152.5,389.5 Z" fill="#9CBCCB"/>
<path d="M1147,411 Q1141,405 1133,405 Q1122,404 1121.5,393.5 Q1122,382 1132,381.5 Q1135,383.5 1136.5,388 Q1139.5,390.5 1147,391.5 Z" fill="#FCE07C"/>
<circle cx="1139.5" cy="397.5" r="6.5" fill="#FDE494"/>
<path d="M1148.3,426 V405.5 Q1151,402 1155,401.5 Q1158,395 1167,390.3 Q1176.5,391.5 1177.2,403.5 Q1177.5,416 1164,418 Q1155,418.5 1148.3,426 Z" fill="#D2E49E"/>
<path d="M1148.3,426 V406 Q1152,404 1156,404.5 Q1163,406 1162.5,412.5 Q1161.5,418 1155,419.5 Q1151,421 1148.3,426 Z" fill="#BED88E"/>
<circle cx="1151.6" cy="399.7" r="3.6" fill="#FCE07C" stroke="#fff" stroke-width="1"/>
<circle cx="1173.8" cy="387.9" r="2.9" fill="#D2E49E"/>
<rect x="1147" y="378" width="1.2" height="49" fill="#fff"/>
<polyline points="1810,284.3 1818.5,292.8 1827,284.3" fill="none" stroke="#333" stroke-width="1.2"/>
<path d="M1853,282.5 L1865,294.3 M1865,282.5 L1853,294.3" stroke="#333" stroke-width="1.2"/>
<line x1="1808" y1="334.9" x2="1845.5" y2="334.9" stroke="#000" stroke-width="5.6" stroke-linecap="round"/>
<line x1="1808" y1="349.8" x2="1845.5" y2="349.8" stroke="#000" stroke-width="5.6" stroke-linecap="round"/>
<line x1="1808" y1="364.7" x2="1845.5" y2="364.7" stroke="#000" stroke-width="5.6" stroke-linecap="round"/>
<path d="M1861.3,391 L1865.3,384.8 L1869.3,391 Z" fill="#2F7BD9"/>
<path d="M1861.3,1217.8 L1865.3,1223.8 L1869.3,1217.8 Z" fill="#2F7BD9"/>
<rect x="1478" y="470.7" width="381" height="1" fill="#CFCFCF"/>
<rect x="1478" y="531" width="381" height="60.5" fill="#E6E6E6"/>
<rect x="1478" y="531" width="381" height="1" fill="#D2D2D2"/>
<rect x="1478" y="590.8" width="381" height="1" fill="#D2D2D2"/>
<rect x="1478" y="650.2" width="381" height="60.6" fill="#D4D4D4"/>
<rect x="1478" y="770" width="381" height="93.6" fill="#D4D4D4"/>
<rect x="1478" y="957" width="381" height="1" fill="#CFCFCF"/>
<path d="M120,1249 V1262.5 H126.5 M120,1249 H123.5 L125,1250.5 H135 V1255.5 M125,1250.5 V1262.5" fill="none" stroke="#555" stroke-width="1.2"/>
<path d="M129.5,1257 L136.5,1264 M136.5,1257 L129.5,1264" stroke="#555" stroke-width="1.1"/>
<rect x="432.5" y="1249" width="17" height="14" fill="none" stroke="#555" stroke-width="1.1"/>
<path d="M432.5,1252 H449.5 M435,1255 H439 M435,1258 H438" stroke="#555" stroke-width="1"/>
<circle cx="444.5" cy="1258.5" r="3.6" fill="#fff" stroke="#444" stroke-width="1.2"/><circle cx="444.5" cy="1258.5" r="1.6" fill="#444"/>
<circle cx="481" cy="1249" r="2" fill="none" stroke="#444" stroke-width="1.1"/>
<path d="M473,1252 Q477,1254 481,1252.5 Q485,1251 488,1252 M480,1253 Q478,1258 480,1262 L478.5,1266 M482,1257 L485,1262 L491,1255" fill="none" stroke="#444" stroke-width="1.1" stroke-linecap="round"/>
<path d="M1430.8,1250.5 V1248 H1433.5 M1445,1248 H1447.5 V1250.5 M1447.5,1261.5 V1264 H1445 M1433.5,1264 H1430.8 V1261.5" fill="none" stroke="#333" stroke-width="1.4"/>
<path d="M1434.8,1261.5 V1250.5 H1440.5 L1443.3,1253.3 V1261.5 Z" fill="none" stroke="#222" stroke-width="1.2"/>
<path d="M1516.5,1249.5 H1524 V1263.5 H1516.5 Z M1524,1249.5 H1532 V1263.5 H1524" fill="none" stroke="#444" stroke-width="1.2"/>
<rect x="1518.5" y="1252.50" width="3.5" height="1" fill="#666"/><rect x="1518.5" y="1255.50" width="3.5" height="1" fill="#666"/><rect x="1518.5" y="1258.50" width="3.5" height="1" fill="#666"/>
<rect x="1526" y="1252.50" width="4" height="1" fill="#666"/><rect x="1526" y="1255.50" width="4" height="1" fill="#666"/><rect x="1526" y="1258.50" width="4" height="1" fill="#666"/>
<rect x="1550" y="1243" width="50" height="24" fill="#DDDDDD"/>
<rect x="1567.5" y="1249" width="14" height="17" fill="none" stroke="#333" stroke-width="1.3"/>
<rect x="1570" y="1251.95" width="9" height="1.1" fill="#333"/><rect x="1570" y="1254.95" width="9" height="1.1" fill="#333"/><rect x="1570" y="1257.95" width="9" height="1.1" fill="#333"/><rect x="1570" y="1260.95" width="9" height="1.1" fill="#333"/>
<path d="M1616.5,1263 V1249 H1632 V1254" fill="none" stroke="#444" stroke-width="1.2"/>
<rect x="1619" y="1252.00" width="8" height="1" fill="#666"/><rect x="1619" y="1255.00" width="8" height="1" fill="#666"/><rect x="1619" y="1258.00" width="8" height="1" fill="#666"/>
<circle cx="1629.5" cy="1260" r="4.8" fill="#fff" stroke="#333" stroke-width="1.2"/>
<path d="M1624.7,1260 H1634.3 M1629.5,1255.2 V1264.8 M1627.2,1260 Q1627.2,1256 1629.5,1255.2 M1631.8,1260 Q1631.8,1256 1629.5,1255.2" fill="none" stroke="#333" stroke-width="0.9"/>
<rect x="1656.5" y="1255.8" width="9.8" height="1.2" fill="#444"/>
<rect x="1673" y="1256" width="124.5" height="1" fill="#777"/>
<rect x="1733" y="1249" width="5.6" height="14" rx="1" fill="#666"/>
<rect x="1803.6" y="1255.8" width="9.8" height="1.2" fill="#444"/><rect x="1807.9" y="1251.5" width="1.2" height="9.8" fill="#444"/>
<text x="66.37" y="33.40" font-size="16.57" font-weight="normal" fill="#262626" textLength="76.85" lengthAdjust="spacingAndGlyphs">Dokument1</text>
<text x="152.55" y="33.40" font-size="16.50" font-weight="normal" fill="#262626" textLength="5.69" lengthAdjust="spacingAndGlyphs">-</text>
<text x="166.24" y="33.40" font-size="16.57" font-weight="normal" fill="#262626" textLength="36.26" lengthAdjust="spacingAndGlyphs">Word</text>
<text x="15.23" y="83.00" font-size="18.31" font-weight="normal" fill="#242424" textLength="41.76" lengthAdjust="spacingAndGlyphs">Datei</text>
<text x="80.72" y="83.00" font-size="18.31" font-weight="normal" fill="#242424" stroke="#242424" stroke-width="0.6" textLength="35.88" lengthAdjust="spacingAndGlyphs">Start</text>
<text x="140.99" y="83.00" font-size="18.31" font-weight="normal" fill="#242424" textLength="68.12" lengthAdjust="spacingAndGlyphs">Einfügen</text>
<text x="232.75" y="83.00" font-size="18.31" font-weight="normal" fill="#242424" textLength="70.24" lengthAdjust="spacingAndGlyphs">Zeichnen</text>
<text x="326.76" y="83.00" font-size="18.31" font-weight="normal" fill="#242424" textLength="59.51" lengthAdjust="spacingAndGlyphs">Entwurf</text>
<text x="410.89" y="83.00" font-size="18.31" font-weight="normal" fill="#242424" textLength="51.72" lengthAdjust="spacingAndGlyphs">Layout</text>
<text x="486.83" y="83.00" font-size="18.31" font-weight="normal" fill="#242424" textLength="86.65" lengthAdjust="spacingAndGlyphs">Referenzen</text>
<text x="597.51" y="83.00" font-size="18.31" font-weight="normal" fill="#242424" textLength="87.59" lengthAdjust="spacingAndGlyphs">Sendungen</text>
<text x="708.96" y="83.00" font-size="18.31" font-weight="normal" fill="#242424" textLength="88.49" lengthAdjust="spacingAndGlyphs">Überprüfen</text>
<text x="821.17" y="83.00" font-size="18.31" font-weight="normal" fill="#242424" textLength="55.32" lengthAdjust="spacingAndGlyphs">Ansicht</text>
<text x="900.89" y="83.00" font-size="18.31" font-weight="normal" fill="#242424" textLength="114.54" lengthAdjust="spacingAndGlyphs">Entwicklertools</text>
<text x="1039.65" y="83.00" font-size="18.31" font-weight="normal" fill="#242424" textLength="35.33" lengthAdjust="spacingAndGlyphs">Hilfe</text>
<text x="1100.70" y="83.00" font-size="18.31" font-weight="normal" fill="#242424" textLength="74.35" lengthAdjust="spacingAndGlyphs">axesWord</text>
<text x="1476.06" y="81.70" font-size="17.01" font-weight="normal" fill="#242424" textLength="100.22" lengthAdjust="spacingAndGlyphs">Kommentare</text>
<text x="1625.47" y="81.70" font-size="17.01" font-weight="normal" fill="#242424" textLength="94.17" lengthAdjust="spacingAndGlyphs">Bearbeitung</text>
<text x="1775.11" y="81.70" font-size="17.01" font-weight="normal" fill="#ffffff" textLength="76.29" lengthAdjust="spacingAndGlyphs">Freigeben</text>
<text x="26.48" y="163.00" font-size="15.26" font-weight="normal" fill="#262626" textLength="58.87" lengthAdjust="spacingAndGlyphs">Einfügen</text>
<text x="14.79" y="211.00" font-size="12.79" font-weight="normal" fill="#262626" textLength="92.08" lengthAdjust="spacingAndGlyphs">Zwischenablage</text>
<text x="145.46" y="119.70" font-size="15.55" font-weight="normal" fill="#262626" textLength="157.48" lengthAdjust="spacingAndGlyphs">Montserrat (Textkörper)</text>
<text x="329.97" y="119.70" font-size="15.55" font-weight="normal" fill="#262626" textLength="19.11" lengthAdjust="spacingAndGlyphs">9.5</text>
<text x="240.40" y="210.60" font-size="12.79" font-weight="normal" fill="#262626" textLength="52.37" lengthAdjust="spacingAndGlyphs">Schriftart</text>
<text x="512.97" y="210.60" font-size="12.79" font-weight="normal" fill="#262626" textLength="39.66" lengthAdjust="spacingAndGlyphs">Absatz</text>
<text x="706.17" y="153.20" font-size="15.99" font-weight="normal" fill="#1a1a1a" stroke="#fff" stroke-width="0.3" textLength="73.61" lengthAdjust="spacingAndGlyphs">Standard</text>
<text x="835.50" y="153.20" font-size="15.99" font-weight="bold" fill="#111111" textLength="84.52" lengthAdjust="spacingAndGlyphs">Bold: MSU</text>
<text x="982.78" y="156.70" font-size="27.62" font-weight="normal" fill="#3B7EA6" stroke="#3B7EA6" stroke-width="0.9" textLength="60.90" lengthAdjust="spacingAndGlyphs">Titel</text>
<text x="835.91" y="210.80" font-size="12.79" font-weight="normal" fill="#262626" textLength="93.36" lengthAdjust="spacingAndGlyphs">Formatvorlagen</text>
<text x="1136.36" y="158.70" font-size="15.26" font-weight="normal" fill="#262626" textLength="73.02" lengthAdjust="spacingAndGlyphs">Bearbeiten</text>
<text x="1233.54" y="162.40" font-size="15.26" font-weight="normal" fill="#262626" textLength="60.64" lengthAdjust="spacingAndGlyphs">Diktieren</text>
<text x="1239.03" y="211.20" font-size="12.79" font-weight="normal" fill="#262626" textLength="46.53" lengthAdjust="spacingAndGlyphs">Sprache</text>
<text x="1319.93" y="160.00" font-size="15.26" font-weight="normal" fill="#b4b4b4" textLength="65.69" lengthAdjust="spacingAndGlyphs">Sensitivity</text>
<text x="1311.35" y="211.20" font-size="12.79" font-weight="normal" fill="#262626" textLength="80.54" lengthAdjust="spacingAndGlyphs">Vertraulichkeit</text>
<text x="1418.17" y="160.50" font-size="15.26" font-weight="normal" fill="#262626" textLength="33.60" lengthAdjust="spacingAndGlyphs">Add-</text>
<text x="1424.86" y="180.00" font-size="15.26" font-weight="normal" fill="#262626" textLength="19.47" lengthAdjust="spacingAndGlyphs">Ins</text>
<text x="1411.27" y="211.20" font-size="12.79" font-weight="normal" fill="#262626" textLength="44.49" lengthAdjust="spacingAndGlyphs">Add-Ins</text>
<text x="1486.01" y="161.00" font-size="15.26" font-weight="normal" fill="#262626" textLength="40.94" lengthAdjust="spacingAndGlyphs">Editor</text>
<text x="1537.10" y="161.00" font-size="15.26" font-weight="normal" fill="#262626" textLength="50.01" lengthAdjust="spacingAndGlyphs">Copilot</text>
<text x="1639.55" y="119.60" font-size="15.26" font-weight="normal" fill="#262626" textLength="158.92" lengthAdjust="spacingAndGlyphs">getSelectionApp öffnen</text>
<text x="1638.95" y="152.00" font-size="15.26" font-weight="normal" fill="#262626" textLength="148.83" lengthAdjust="spacingAndGlyphs">Meine Daten einfügen</text>
<text x="1660.85" y="211.20" font-size="12.79" font-weight="normal" fill="#262626" textLength="95.09" lengthAdjust="spacingAndGlyphs">getSelectionApp</text>
<text x="16.97" y="245.00" font-size="13.66" font-weight="normal" fill="#262626" textLength="145.24" lengthAdjust="spacingAndGlyphs">Automatisches Speichern</text>
<text x="649.21" y="244.50" font-size="13.66" font-weight="normal" fill="#262626" textLength="112.95" lengthAdjust="spacingAndGlyphs">Navigationsbereich</text>
<text x="462.35" y="278.40" font-size="11.63" font-weight="normal" fill="#3c3c3c" textLength="7.98" lengthAdjust="spacingAndGlyphs">1</text>
<text x="510.00" y="278.40" font-size="11.63" font-weight="normal" fill="#3c3c3c" textLength="7.56" lengthAdjust="spacingAndGlyphs">2</text>
<text x="557.42" y="278.40" font-size="11.63" font-weight="normal" fill="#3c3c3c" textLength="7.27" lengthAdjust="spacingAndGlyphs">3</text>
<text x="604.89" y="278.40" font-size="11.63" font-weight="normal" fill="#3c3c3c" textLength="6.81" lengthAdjust="spacingAndGlyphs">4</text>
<text x="651.88" y="278.40" font-size="11.63" font-weight="normal" fill="#3c3c3c" textLength="7.27" lengthAdjust="spacingAndGlyphs">5</text>
<text x="698.97" y="278.40" font-size="11.63" font-weight="normal" fill="#3c3c3c" textLength="7.46" lengthAdjust="spacingAndGlyphs">6</text>
<text x="746.20" y="278.40" font-size="11.63" font-weight="normal" fill="#3c3c3c" textLength="7.56" lengthAdjust="spacingAndGlyphs">7</text>
<text x="793.57" y="278.40" font-size="11.63" font-weight="normal" fill="#3c3c3c" textLength="7.31" lengthAdjust="spacingAndGlyphs">8</text>
<text x="840.75" y="278.40" font-size="11.63" font-weight="normal" fill="#3c3c3c" textLength="7.43" lengthAdjust="spacingAndGlyphs">9</text>
<text x="884.44" y="278.40" font-size="11.63" font-weight="normal" fill="#3c3c3c" textLength="14.04" lengthAdjust="spacingAndGlyphs">10</text>
<text x="931.59" y="278.40" font-size="11.63" font-weight="normal" fill="#3c3c3c" textLength="14.31" lengthAdjust="spacingAndGlyphs">11</text>
<text x="978.91" y="278.40" font-size="11.63" font-weight="normal" fill="#3c3c3c" textLength="14.21" lengthAdjust="spacingAndGlyphs">12</text>
<text x="1026.15" y="278.40" font-size="11.63" font-weight="normal" fill="#3c3c3c" textLength="14.13" lengthAdjust="spacingAndGlyphs">13</text>
<text x="1073.41" y="278.40" font-size="11.63" font-weight="normal" fill="#3c3c3c" textLength="13.90" lengthAdjust="spacingAndGlyphs">14</text>
<text x="1120.64" y="278.40" font-size="11.63" font-weight="normal" fill="#3c3c3c" textLength="14.10" lengthAdjust="spacingAndGlyphs">15</text>
<text x="927.49" y="466.70" font-size="16.42" font-weight="normal" fill="#7a7a7a" textLength="88.81" lengthAdjust="spacingAndGlyphs">Mediasuite</text>
<text x="928.17" y="488.70" font-size="16.42" font-weight="normal" fill="#7a7a7a" textLength="115.60" lengthAdjust="spacingAndGlyphs">Albisstrasse 33</text>
<text x="927.77" y="510.80" font-size="16.42" font-weight="normal" fill="#7a7a7a" textLength="100.77" lengthAdjust="spacingAndGlyphs">8134 Adliswil</text>
<text x="423.98" y="593.90" font-size="17.01" font-weight="normal" fill="#1a1a1a" textLength="319.16" lengthAdjust="spacingAndGlyphs">Mediasuite, Albisstrasse 33, 8134 Adliswil</text>
<rect x="420" y="600" width="176" height="22" fill="#FFF2CC"/>
<text x="419.73" y="617.80" font-size="17.01" font-weight="normal" fill="#1a1a1a" textLength="176.89" lengthAdjust="spacingAndGlyphs">Empfänger einfügen...</text>
<text x="330.27" y="763.00" font-size="14.24" font-weight="normal" fill="#6b6b6b" textLength="75.33" lengthAdjust="spacingAndGlyphs">Ihr Kontakt</text>
<text x="419.47" y="763.80" font-size="17.01" font-weight="normal" fill="#1a1a1a" textLength="129.43" lengthAdjust="spacingAndGlyphs">Dirk Stöhrmann</text>
<text x="561.80" y="763.80" font-size="17.01" font-weight="normal" fill="#1a1a1a" textLength="129.64" lengthAdjust="spacingAndGlyphs">+41 44 380 03 32</text>
<text x="703.95" y="763.80" font-size="17.01" font-weight="normal" fill="#1a1a1a" textLength="122.35" lengthAdjust="spacingAndGlyphs">+41 79 123 45 67</text>
<text x="839.89" y="763.80" font-size="17.01" font-weight="normal" fill="#1a1a1a" textLength="227.07" lengthAdjust="spacingAndGlyphs">stoehrmann@mediasuite.ch</text>
<rect x="554.1" y="751.2" width="1.3" height="15.4" fill="#1a1a1a"/>
<rect x="697.1" y="751.2" width="1.3" height="15.4" fill="#1a1a1a"/>
<rect x="832.8" y="751.2" width="1.3" height="15.4" fill="#1a1a1a"/>
<text x="357.95" y="795.30" font-size="14.24" font-weight="normal" fill="#6b6b6b" textLength="48.63" lengthAdjust="spacingAndGlyphs">Datum</text>
<rect x="494" y="778.3" width="129" height="21.7" fill="#FFF2CC"/>
<text x="420.96" y="795.70" font-size="17.01" font-weight="normal" fill="#1a1a1a" textLength="60.23" lengthAdjust="spacingAndGlyphs">Adliswil</text>
<rect x="486.8" y="783.2" width="1.3" height="15.4" fill="#1a1a1a"/>
<text x="493.02" y="795.70" font-size="17.01" font-weight="normal" fill="#1a1a1a" textLength="130.60" lengthAdjust="spacingAndGlyphs">Datum wählen...</text>
<text x="419.99" y="876.00" font-size="17.44" font-weight="bold" fill="#1a1a1a" textLength="171.41" lengthAdjust="spacingAndGlyphs">Der Dokumenttitel</text>
<rect x="420" y="915" width="144" height="21.8" fill="#FFF2CC"/>
<text x="420.96" y="933.00" font-size="17.01" font-weight="normal" fill="#1a1a1a" textLength="143.60" lengthAdjust="spacingAndGlyphs">Anrede einfügen...</text>
<rect x="420" y="959.3" width="119" height="21.4" fill="#FFF2CC"/>
<text x="420.61" y="976.50" font-size="17.01" font-weight="normal" fill="#1a1a1a" textLength="118.97" lengthAdjust="spacingAndGlyphs">Text einfügen...</text>
<text x="419.54" y="1019.70" font-size="17.01" font-weight="normal" fill="#1a1a1a" textLength="155.55" lengthAdjust="spacingAndGlyphs">Freundliche Grüsse</text>
<rect x="420" y="1046" width="190" height="21.8" fill="#FFF2CC"/>
<text x="419.52" y="1063.80" font-size="17.01" font-weight="normal" fill="#1a1a1a" textLength="191.10" lengthAdjust="spacingAndGlyphs">Firmenname einfügen...</text>
<text x="419.47" y="1151.20" font-size="17.01" font-weight="normal" fill="#1a1a1a" textLength="129.33" lengthAdjust="spacingAndGlyphs">Dirk Stöhrmann</text>
<text x="419.91" y="1173.00" font-size="17.01" font-weight="normal" fill="#1a1a1a" textLength="127.08" lengthAdjust="spacingAndGlyphs">Geschäftsführer</text>
<text x="1463.33" y="294.80" font-size="18.31" font-weight="normal" fill="#1f1f1f" stroke="#1f1f1f" stroke-width="0.55" textLength="237.70" lengthAdjust="spacingAndGlyphs">Mediasuite getSelectionApp</text>
<text x="1477.90" y="341.30" font-size="17.44" font-weight="bold" fill="#3a7bd5" textLength="181.17" lengthAdjust="spacing">GETSELECTIONAPP</text>
<text x="1475.50" y="369.80" font-size="30.52" font-weight="normal" fill="#111111" stroke="#F5F5F5" stroke-width="1.1" textLength="268.52" lengthAdjust="spacing">DIRK STÖHRMANN</text>
<text x="1476.39" y="436.20" font-size="28.49" font-weight="normal" fill="#3a7bd5" stroke="#F5F5F5" stroke-width="0.25" textLength="231.16" lengthAdjust="spacingAndGlyphs">MEINE VORLAGEN</text>
<text x="1489.82" y="509.70" font-size="24.42" font-weight="bold" fill="#000000" textLength="65.66" lengthAdjust="spacingAndGlyphs">DATEI</text>
<text x="1719.94" y="509.70" font-size="24.42" font-weight="bold" fill="#000000" textLength="58.80" lengthAdjust="spacingAndGlyphs">PFAD</text>
<text x="1492.38" y="567.90" font-size="22.82" font-weight="normal" font-style="italic" fill="#9dcbe9" textLength="163.84" lengthAdjust="spacingAndGlyphs">Alles anzeigen ...</text>
<clipPath id="clipPfad"><rect x="1700" y="540" width="134" height="40"/></clipPath>
<text x="1721.78" y="567.90" font-size="22.82" font-weight="normal" font-style="italic" fill="#9dcbe9" textLength="163.84" lengthAdjust="spacingAndGlyphs" clip-path="url(#clipPfad)">Alles anzeigen ...</text>
<text x="1489.26" y="628.60" font-size="25.15" font-weight="normal" fill="#3a78d0" stroke="#3a78d0" stroke-width="0.45" textLength="136.60" lengthAdjust="spacingAndGlyphs">Bericht.docx</text>
<text x="1489.20" y="688.30" font-size="25.15" font-weight="normal" fill="#3a78d0" stroke="#3a78d0" stroke-width="0.45" textLength="107.96" lengthAdjust="spacingAndGlyphs">Brief.dotx</text>
<text x="1489.26" y="748.40" font-size="25.15" font-weight="normal" fill="#3a78d0" stroke="#3a78d0" stroke-width="0.45" textLength="172.99" lengthAdjust="spacingAndGlyphs">Dokument.docx</text>
<text x="1489.16" y="808.00" font-size="25.15" font-weight="normal" fill="#3a78d0" stroke="#3a78d0" stroke-width="0.45" textLength="127.69" lengthAdjust="spacingAndGlyphs">getBrief-v1-</text>
<text x="1489.50" y="841.50" font-size="25.15" font-weight="normal" fill="#3a78d0" stroke="#3a78d0" stroke-width="0.45" textLength="83.75" lengthAdjust="spacingAndGlyphs">22.docx</text>
<text x="1489.16" y="901.70" font-size="25.15" font-weight="normal" fill="#3a78d0" stroke="#3a78d0" stroke-width="0.45" textLength="127.69" lengthAdjust="spacingAndGlyphs">getBrief-v1-</text>
<text x="1489.50" y="935.30" font-size="25.15" font-weight="normal" fill="#3a78d0" stroke="#3a78d0" stroke-width="0.45" textLength="83.75" lengthAdjust="spacingAndGlyphs">23.docx</text>
<text x="11.80" y="1260.80" font-size="13.81" font-weight="normal" fill="#3a3a3a" textLength="82.01" lengthAdjust="spacingAndGlyphs">Seite 1 von 11</text>
<text x="158.18" y="1260.80" font-size="13.81" font-weight="normal" fill="#3a3a3a" textLength="103.79" lengthAdjust="spacingAndGlyphs">Deutsch (Schweiz)</text>
<text x="286.22" y="1260.80" font-size="13.81" font-weight="normal" fill="#3a3a3a" textLength="120.10" lengthAdjust="spacingAndGlyphs">Textvorhersagen: ein</text>
<text x="493.43" y="1260.80" font-size="13.81" font-weight="normal" fill="#3a3a3a" textLength="185.15" lengthAdjust="spacingAndGlyphs">Barrierefreiheit: Keine Probleme</text>
<text x="1450.38" y="1260.80" font-size="13.81" font-weight="normal" fill="#3a3a3a" textLength="33.75" lengthAdjust="spacingAndGlyphs">Fokus</text>
<text x="1829.55" y="1260.80" font-size="13.81" font-weight="normal" fill="#3a3a3a" textLength="32.10" lengthAdjust="spacingAndGlyphs">100%</text>
</svg>
</body></html>
